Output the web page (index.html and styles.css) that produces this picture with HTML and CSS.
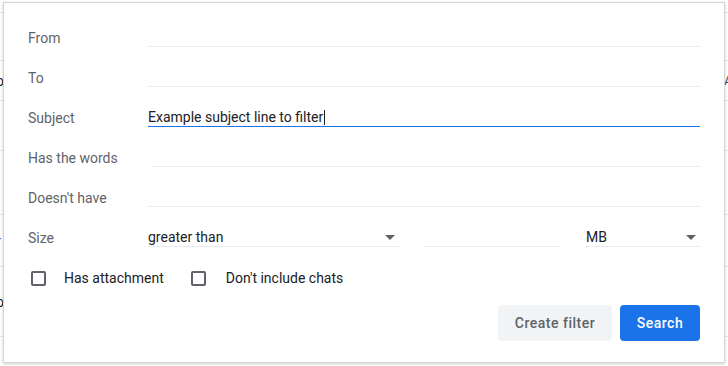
FILE: index.html
```html
<!DOCTYPE html>
<html>
<head>
<meta charset="utf-8">
<link rel="stylesheet" href="styles.css">
</head>
<body>
<div class="page">
  <div class="bg-row r1"><span class="bg-l"></span><span class="bg-r"></span></div>
  <div class="bg-row r2"><span class="bg-l">o:</span><span class="bg-r">A</span></div>
  <div class="bg-row r3"><span class="bg-l">i</span><span class="bg-r"></span></div>
  <div class="bg-row r4"><span class="bg-l"></span><span class="bg-r"></span></div>
  <div class="bg-row r5"><span class="bg-l">r</span><span class="bg-r"></span></div>
  <div class="bg-row r6"><span class="bg-l">o</span><span class="bg-r"></span></div>
  <div class="bg-row r7"><span class="bg-l"></span><span class="bg-r"></span></div>
</div>

<div class="dialog">
  <div class="row">
    <div class="label">From</div>
    <div class="field"></div>
  </div>
  <div class="row">
    <div class="label">To</div>
    <div class="field"></div>
  </div>
  <div class="row">
    <div class="label">Subject</div>
    <div class="field active"><span class="value">Example subject line to filter</span><span class="caret"></span></div>
  </div>
  <div class="row">
    <div class="label">Has the words</div>
    <div class="field shifted"></div>
  </div>
  <div class="row">
    <div class="label">Doesn't have</div>
    <div class="field"></div>
  </div>
  <div class="row">
    <div class="label">Size</div>
    <div class="size-group">
      <div class="field select cmp"><span class="value">greater than</span><span class="arrow"></span></div>
      <div class="field num"></div>
      <div class="field select unit"><span class="value">MB</span><span class="arrow"></span></div>
    </div>
  </div>
  <div class="row checks">
    <label class="check first"><span class="box"></span><span class="check-text">Has attachment</span></label>
    <label class="check second"><span class="box"></span><span class="check-text">Don't include chats</span></label>
  </div>
  <div class="actions">
    <button class="btn secondary">Create filter</button>
    <button class="btn primary">Search</button>
  </div>
</div>
</body>
</html>
```
FILE: styles.css
```css
* { box-sizing: border-box; }
html, body {
  margin: 0;
  padding: 0;
  width: 728px;
  height: 366px;
  overflow: hidden;
  background: #ffffff;
  font-family: Roboto, "Liberation Sans", Arial, sans-serif;
}

.page {
  padding-top: 12px;
}
.bg-row {
  display: flex;
  justify-content: space-between;
  align-items: center;
  border-top: 1px solid #e6e6e6;
  font-size: 14px;
  color: #222;
}
.bg-row.r1 { height: 48px; }
.bg-row.r2 { height: 40px; }
.bg-row.r3 { height: 50px; }
.bg-row.r4 { height: 64px; }
.bg-row.r5 { height: 52px; }
.bg-row.r6 { height: 70px; }
.bg-row.r7 { height: 40px; }
.bg-l { margin-left: -4px; }
.bg-r { margin-right: -4px; font-size: 12px; color: #444; }

.dialog {
  position: absolute;
  left: 3px;
  top: 2px;
  width: 722px;
  height: 361px;
  background: #ffffff;
  border: 1px solid #d4d4d4;
  box-shadow: 0 1px 3px rgba(0,0,0,0.18);
  padding: 14px 24px 0 24px;
}

.row {
  display: flex;
  align-items: center;
  height: 40px;
}
.label {
  width: 120px;
  flex: none;
  font-size: 14px;
  color: #5f6368;
  padding-top: 2px;
}
.field {
  flex: 1;
  height: 20px;
  border-bottom: 1px solid #e8eaed;
  font-size: 14px;
  line-height: 19px;
  padding-top: 1px;
  color: #202124;
  display: flex;
  align-items: center;
}
.field.shifted { margin-left: 4px; }
.field.active { border-bottom: 1px solid #1a73e8; }
.caret {
  display: inline-block;
  width: 1px;
  height: 15px;
  background: #202124;
  margin-left: 1px;
}

.size-group {
  flex: 1;
  display: flex;
  gap: 25px;
}
.field.cmp { flex: none; width: 251px; }
.field.num { flex: none; width: 137px; }
.field.unit { flex: 1; }
.select { justify-content: space-between; }
.arrow {
  width: 0;
  height: 0;
  border-left: 5px solid transparent;
  border-right: 5px solid transparent;
  border-top: 5px solid #5f6368;
  margin-right: 4px;
}

.check {
  display: flex;
  align-items: center;
  font-size: 14px;
  color: #202124;
  padding-top: 2px;
}
.check.first { margin-left: 3px; margin-right: 27px; }
.box {
  width: 15px;
  height: 15px;
  border: 2px solid #5f6368;
  border-radius: 2px;
  margin-right: 18px;
}
.check.second .box { margin-right: 20px; }

.actions {
  display: flex;
  justify-content: flex-end;
  gap: 8px;
  margin-top: 8px;
}
.btn {
  height: 36px;
  border: none;
  border-radius: 4px;
  font-family: Roboto, "Liberation Sans", Arial, sans-serif;
  font-size: 14px;
  font-weight: 500;
  padding: 0;
  letter-spacing: 0.5px;
}
.btn.secondary {
  background: #f1f3f4;
  color: #5f6368;
  width: 114px;
}
.btn.primary {
  background: #1a73e8;
  color: #ffffff;
  width: 80px;
}
```
